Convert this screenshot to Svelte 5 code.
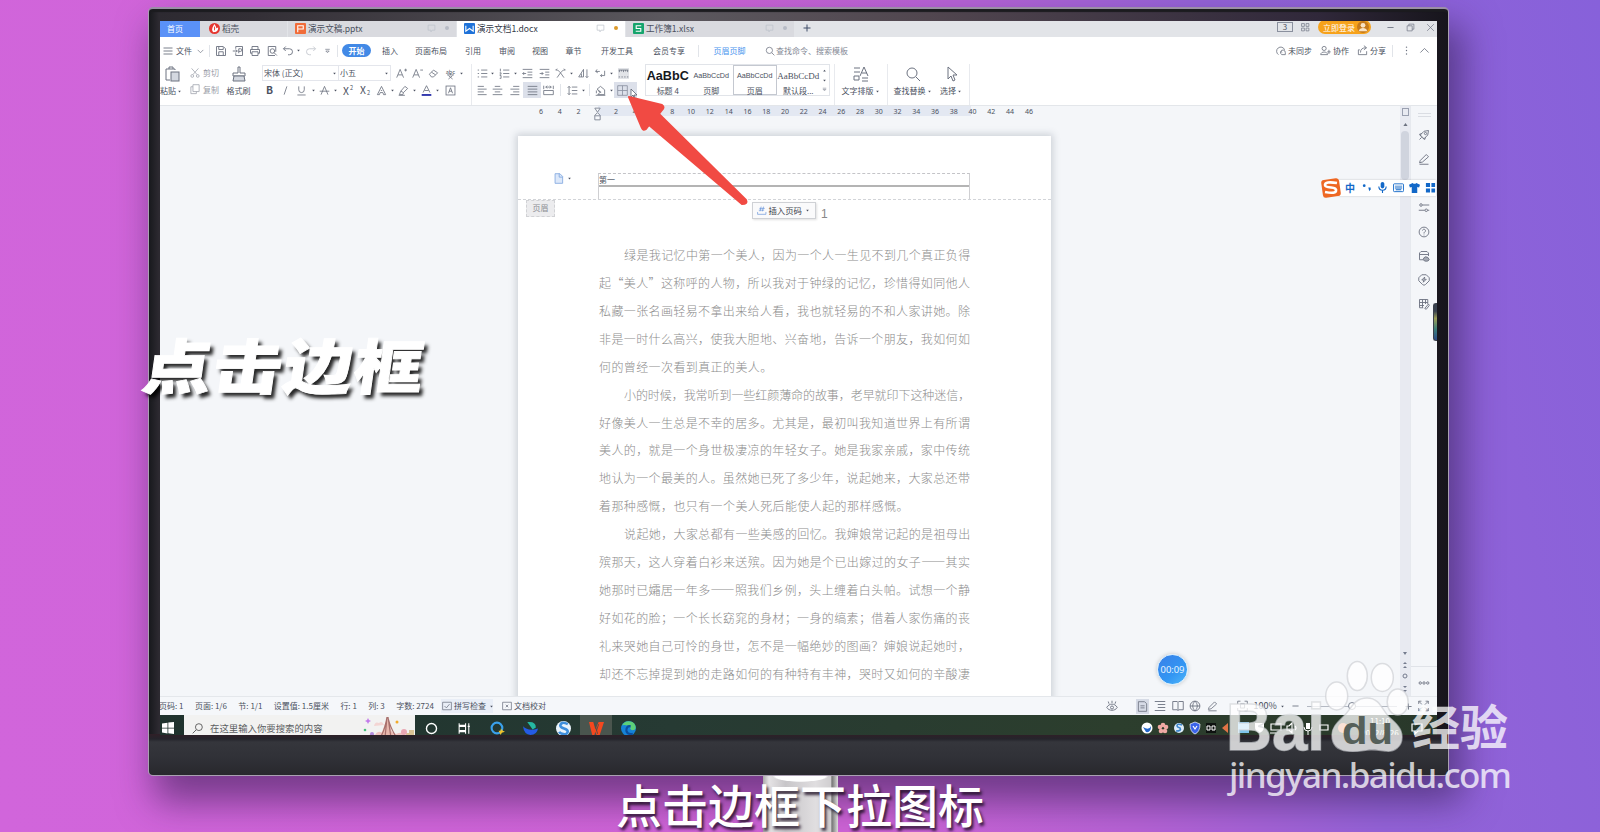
<script lang="ts">
	type Tool = [name: string, width: number, active?: boolean];

	// 16x16 line icons
	const icons: Record<string, string> = {
		menu: '<path d="M2 4h12M2 8h12M2 12h12"/>',
		down: '<path d="M3 6l5 5 5-5"/>',
		up: '<path d="M2 11l6-6 6 6"/>',
		caret: '<path class="fill" d="M5 6h6l-3 4z"/>',
		save: '<path d="M2 2h9l3 3v9H2zM5 2v4h6V3M5 14V9h6v5"/>',
		pdf: '<path d="M5 2h9v12H5v-3M5 5V2M1 8h6M5 6l2 2-2 2M9 11V5h2.500a1.500 1.500 0 0 1 0 3.500H9"/>',
		print: '<path d="M4 6V2h8v4M4 11H2V6h12v5h-2M4 9h8v5H4z"/>',
		preview: '<path d="M12 14H3V2h10v7"/><circle cx="8.500" cy="8" r="3"/><path d="M10.500 10l4 4"/>',
		undo: '<path d="M5 2L2 5l3 3M2 5h8a4 4 0 0 1 0 8H8"/>',
		redo: '<path d="M11 2l3 3-3 3M14 5H6a4 4 0 0 0 0 8h2"/>',
		more: '<path d="M4 5h8M5 8l3 3 3-3z"/>',
		search: '<circle cx="7" cy="7" r="5"/><path d="M11 11l4 4"/>',
		paste: '<path d="M11 4V3H2v11h4M5 3V1h4v2"/><rect x="7" y="6" width="8" height="9" fill="#d4d8e0"/>',
		cut: '<path d="M3 2l8 9M13 2L5 11"/><circle cx="4" cy="13" r="2"/><circle cx="12" cy="13" r="2"/>',
		copy: '<path d="M5 1h9v10H5zM5 4H2v10h8v-3"/>',
		brush: '<path d="M7 1h2v6h5v3H2V7h5z"/><path d="M3 10h10l1 5H2z" fill="#d4d8e0"/>',
		bold: '<text x="3" y="13.500" font-size="15" font-weight="700">B</text>',
		italic: '<path d="M10 2L6 14"/>',
		under: '<path d="M4 2v5a4 4 0 0 0 8 0V2M2 14.500h12"/>',
		strike: '<path d="M3 14L8 2l5 12M1 9h14"/>',
		sup: '<text x="0" y="14" font-size="15">X</text><text x="10" y="7" font-size="8">2</text>',
		sub: '<text x="0" y="13" font-size="15">X</text><text x="10" y="15" font-size="8">2</text>',
		outline: '<path d="M2 14L8 2l6 12h-3l-1-3H6l-1 3zM7 8h2"/>',
		marker: '<path d="M4 9l6-7 4 3-6 6zM4 9l-2 5h5l1-3M1 15h9" />',
		color: '<path d="M3 11L8 1l5 10M5 8h6"/><path d="M1 14.500h14" stroke="#232aa8" stroke-width="2.600"/>',
		boxa: '<rect x="1.500" y="1.500" width="13" height="13"/><path d="M5 12l3-8 3 8M6 9h4"/>',
		bigger: '<path d="M1 14L6 2l5 12M3 10h6M12 3h4M14 1v4"/>',
		smaller: '<path d="M1 14L6 2l5 12M3 10h6M12 3h4"/>',
		eraser: '<path d="M2 9l6-6 6 4-6 6H5zM5 6l6 4"/>',
		pinyin: '<text x="1" y="8" font-size="8">abc</text><path d="M3 10h10M8 8v2M5 11l6 5M11 11l-6 5"/>',
		bullets: '<path d="M6 3h9M6 8h9M6 13h9M1 3h2M1 8h2M1 13h2"/>',
		numbers: '<path d="M6 3h9M6 8h9M6 13h9M2 1v4M1 7h2v2H1M1 11h2v4H1"/>',
		outdent: '<path d="M1 2h14M8 6h7M8 10h7M1 14h14M6 8H1M3 6L1 8l2 2"/>',
		indent: '<path d="M1 2h14M9 6h6M9 10h6M1 14h14M1 8h5M4 6l2 2-2 2"/>',
		width: '<path d="M3 14l5-7 5 7M1 3h3M12 3h3M4 3l4 4 4-4M1 3l2-2M15 3l-2-2"/>',
		sort: '<path d="M1 13L8 2v11zM5 8v5M13 2v12M11 12l2 2 2-2"/>',
		wrap: '<path d="M3 2L1 5l3 2M1 5h6M14 4v7H8M10 9l-2 2 2 2"/>',
		tabs: '<path d="M1 3h14M2 3v3M5 3v2M8 3v3M11 3v2M14 3v3M1 13h2M5 13h2M9 13h2M13 13h2"/>',
		left: '<path d="M1 2h9M1 6h13M1 10h9M1 14h13"/>',
		center: '<path d="M4 2h8M1 6h14M4 10h8M1 14h14"/>',
		right: '<path d="M6 2h9M2 6h13M6 10h9M2 14h13"/>',
		justify: '<path d="M1 2h14M1 6h14M1 10h14M1 14h14"/>',
		spread: '<path d="M1 1v5M15 1v5M4 3h8M1 8h14v6H1zM6 1L4 3l2 2M10 1l2 2-2 2"/>',
		spacing: '<path d="M7 3h8M7 8h8M7 13h8M3 2v12M1 4l2-2 2 2M1 12l2 2 2-2"/>',
		shade: '<path d="M3 6l5-4 6 5v7H4l4-4zM1 15h14M4 8l5 3M2 8v4"/>',
		border: '<path d="M1 1h14v14H1zM8 1v14M1 8h14" stroke="#8b91a0"/>',
		typeset: '<path d="M1 2h6M1 6h6M1 10h5v4H1zM9 12h6M9 15h6M7 10l4-9 4 9M9 7h5"/>',
		pointer: '<path d="M4 1v12l3-3 2 5 2-1-2-5h4z"/>',
		sync: '<path d="M5 14a6 6 0 1 1 9-7M10 14a3.500 3.500 0 1 1 5-3v3h-5M9 9l1 2"/>',
		people: '<circle cx="6" cy="5" r="3"/><path d="M1 14c0-5 10-5 10 0zM13 7v6M10.500 10h5"/>',
		share: '<path d="M4 7H2v7h12V9M5 11c0-5 3-7 8-7M10 1l4 3-4 3"/>',
		dots: '<path d="M8 3v.1M8 8v.1M8 13v.1" stroke-width="2" stroke-linecap="round"/>',
		hdots: '<circle cx="3" cy="8" r="1.600"/><circle cx="8" cy="8" r="1.600"/><circle cx="13" cy="8" r="1.600"/>',
		rocket: '<path d="M3 8l5-5 6-1-1 6-5 5zM5 6L2 7l2 3M10 11l-1 3-3-2M2 14l3-3"/><circle cx="10" cy="6" r="1.500"/>',
		pen: '<path d="M3 10l8-8 3 3-8 7-4 1zM2 15h12"/>',
		sliders: '<circle cx="4" cy="4" r="1.700"/><path d="M6 4h9M1 11h8M13 11h2"/><circle cx="11" cy="11" r="1.700"/>',
		help: '<circle cx="8" cy="8" r="6.500"/><path d="M6 6a2 2 0 1 1 3 2l-1 1v1M8 11.500v1"/>',
		cloud: '<path d="M2 13V4l2-2h8l2 2v4M2 6h12M2 13h5"/><path d="M7 13q0-3 3-4 4 0 5 4-1 2-4 2-3 0-4-2z" fill="#a5aab4"/>',
		diamond: '<path d="M5 1h6l4 4v4l-5 5-2 1-2-1-5-5V5zM5 8l4-4-1 3h3l-4 4 1-3z"/>',
		grid: '<path d="M2 2h11v6M2 2v11h5M2 6h11M2 10h6M6 2v11M10 2v6M9 14l5-6 1 2-4 5z"/>',
		eye: '<path d="M1 10c3-6 11-6 14 0-3 5-11 5-14 0zM8 4V1M4 5L3 2M12 5l1-3"/><circle cx="8" cy="10" r="2"/>',
		page: '<path d="M2 1h9l3 3v11H2zM5 7h6M5 10h6"/>',
		outlineview: '<path d="M1 2h14M5 6h10M5 10h10M1 14h14"/>',
		book: '<path d="M1 2h6l1 1 1-1h6v11H9l-1 1-1-1H1zM8 3v11"/>',
		globe: '<circle cx="8" cy="8" r="6.500"/><path d="M1.500 8h13M8 1.500c-4 4-4 9 0 13M8 1.500c4 4 4 9 0 13"/>',
		fit: '<path d="M1 5V1h4M11 1h4v4M15 11v4h-4M5 15H1v-4M5 5h6v6H5z"/>',
		expand: '<path d="M1 5V1h4M11 1h4v4M15 11v4h-4M5 15H1v-4M1 1l5 5M15 1l-5 5M1 15l5-5M15 15l-5-5"/>',
		check: '<path d="M1 2h14v12H1zM4 8l3 3 5-6"/>',
		proof: '<path d="M1 2h14v12H1zM6 6l4 4M10 6l-4 4"/>',
		minus: '<path d="M1 8h14" stroke-width="2"/>',
		plus: '<path d="M8 1v14M1 8h14" stroke-width="2"/>',
		close: '<path d="M2 2l12 12M14 2L2 14"/>',
		restore: '<path d="M2 5h9v9H2zM5 5V2h9v9h-3"/>',
		apps: '<path d="M1 1h5v5H1zM9 1h5v5H9zM1 9h5v5H1zM9 9h5v5H9z"/>',
		bubble: '<path d="M2 2h12v9H9l-2 3v-3H2z"/>',
		file: '<path d="M3 1h7l4 4v10H3z" fill="#dce8fa"/><path d="M9 1v5h5"/>'
	};

	const quick = ['save', 'pdf', 'print', 'preview', 'undo', 'caret', 'redo', 'more'];
	const menus = ['开始', '插入', '页面布局', '引用', '审阅', '视图', '章节', '开发工具', '会员专享'];

	const fontTop: Tool[] = [['bigger', 15], ['smaller', 16.5], ['eraser', 16.5], ['pinyin', 16], ['caret', 6]];
	const fontBottom: Tool[] = [
		['bold', 15], ['italic', 17], ['under', 15], ['caret', 8], ['strike', 15], ['caret', 7], ['sup', 18], ['sub', 16],
		['outline', 16], ['caret', 6], ['marker', 16], ['caret', 7], ['color', 17], ['caret', 5], ['boxa', 20]
	];
	const paraTop: Tool[] = [
		['bullets', 14], ['caret', 7], ['numbers', 16], ['caret', 7], ['outdent', 17], ['indent', 16], ['width', 16],
		['caret', 7], ['sort', 17], ['wrap', 16], ['caret', 6], ['tabs', 18]
	];
	const paraBottom: Tool[] = [
		['left', 14], ['center', 17], ['right', 17], ['justify', 18, true], ['spread', 15], ['sep', 8], ['spacing', 16],
		['caret', 6], ['sep', 6], ['shade', 16], ['caret', 6], ['border', 23, true]
	];

	const styles = [
		{ sample: 'AaBbC', name: '标题 4', kind: 'heading' },
		{ sample: 'AaBbCcDd', name: '页脚', kind: 'small' },
		{ sample: 'AaBbCcDd', name: '页眉', kind: 'small chosen' },
		{ sample: 'AaBbCcDd', name: '默认段...', kind: 'serif' }
	];

	const ruler = ['6', '4', '2', '', ...Array.from({ length: 23 }, (_, i) => String(i * 2 + 2))];

	const lines = [
		{ text: '绿是我记忆中第一个美人，因为一个人一生见不到几个真正负得', kind: 'first' },
		{ text: '起“美人”这称呼的人物，所以我对于钟绿的记忆，珍惜得如同他人', kind: '' },
		{ text: '私藏一张名画轻易不拿出来给人看，我也就轻易的不和人家讲她。除', kind: '' },
		{ text: '非是一时什么高兴，使我大胆地、兴奋地，告诉一个朋友，我如何如', kind: '' },
		{ text: '何的曾经一次看到真正的美人。', kind: 'last' },
		{ text: '小的时候，我常听到一些红颜薄命的故事，老早就印下这种迷信，', kind: 'first' },
		{ text: '好像美人一生总是不幸的居多。尤其是，最初叫我知道世界上有所谓', kind: '' },
		{ text: '美人的，就是一个身世极凄凉的年轻女子。她是我家亲戚，家中传统', kind: '' },
		{ text: '地认为一个最美的人。虽然她已死了多少年，说起她来，大家总还带', kind: '' },
		{ text: '着那种感慨，也只有一个美人死后能使人起的那样感慨。', kind: 'last' },
		{ text: '说起她，大家总都有一些美感的回忆。我婶娘常记起的是祖母出', kind: 'first' },
		{ text: '殡那天，这人穿着白衫来送殡。因为她是个已出嫁过的女子——其实', kind: '' },
		{ text: '她那时已孀居一年多——照我们乡例，头上缠着白头帕。试想一个静', kind: '' },
		{ text: '好如花的脸；一个长长窈窕的身材；一身的缟素；借着人家伤痛的丧', kind: '' },
		{ text: '礼来哭她自己可怜的身世，怎不是一幅绝妙的图画？婶娘说起她时，', kind: '' },
		{ text: '却还不忘掉提到她的走路如何的有种特有丰神，哭时又如何的辛酸凄', kind: '' }
	];

	const side = ['rocket', 'pen', '', 'sliders', 'help', 'cloud', 'diamond', 'grid'];
	const counts = ['页码: 1', '页面: 1/6', '节: 1/1', '设置值: 1.5厘米', '行: 1', '列: 3', '字数: 2724'];
	const views = ['outlineview', 'book', 'globe', 'pen'];
</script>

{#snippet icon(name: string)}
	<svg class="icon {name}" viewBox="0 0 16 16">{@html icons[name]}</svg>
{/snippet}

{#snippet tools(list: Tool[])}
	<div class="tools">
		{#each list as [name, width, active]}
			<span class="tool" class:active style="width: {width}px">
				{#if name === 'sep'}<i class="sep"></i>{:else}{@render icon(name)}{/if}
			</span>
		{/each}
	</div>
{/snippet}

<main class="stage" lang="zh-CN">
	<div class="monitor">
		<div class="screen">
			<header class="tabs">
				<div class="home">首页</div>
				<div class="tab">
					<svg class="logo" viewBox="0 0 12 12"><circle cx="6" cy="6" r="6" fill="#e5362f" /><path d="M6 1l2 4-1 1 3-1c0 4-2 5-5 5C2 8 4 4 6 1z" fill="#fff" /><path d="M6 4v4" stroke="#e5362f" /></svg>
					<span>稻壳</span>
				</div>
				<div class="tab">
					<svg class="logo" viewBox="0 0 12 12"><rect width="12" height="12" rx="1" fill="#f16c39" /><path d="M3 10V3h6v3.500H3" fill="none" stroke="#fff" stroke-width="1.200" /></svg>
					<span>演示文稿.pptx</span>
					<div class="state">{@render icon('bubble')}<i></i></div>
				</div>
				<div class="tab current">
					<svg class="logo" viewBox="0 0 12 12"><rect width="12" height="12" rx="1" fill="#1e72d9" /><path d="M2 3v6l4-3 4 3V3" fill="none" stroke="#fff" stroke-width="1.200" /></svg>
					<span>演示文档1.docx</span>
					<div class="state">{@render icon('bubble')}<i></i></div>
				</div>
				<div class="tab">
					<svg class="logo" viewBox="0 0 12 12"><rect width="12" height="12" rx="1" fill="#16a56d" /><path d="M9 3H3.500v3h5v3H3" fill="none" stroke="#fff" stroke-width="1.200" /></svg>
					<span>工作簿1.xlsx</span>
					<div class="state">{@render icon('bubble')}<i></i></div>
				</div>
				<div class="add">{@render icon('plus')}</div>
				<div class="window">
					<span class="count">3</span>
					{@render icon('apps')}
					<div class="login">立即登录<svg viewBox="0 0 14 14"><circle cx="7" cy="7" r="7" fill="#c57a1c" /><circle cx="7" cy="5" r="2.800" fill="#f9e3c4" /><path d="M2 12c1-5 9-5 10 0" fill="#f9e3c4" /></svg></div>
					<i class="sep"></i>
					{@render icon('minus')}
					{@render icon('restore')}
					{@render icon('close')}
				</div>
			</header>

			<nav class="menubar">
				{@render icon('menu')}
				<span>文件</span>
				{@render icon('down')}
				<i class="sep"></i>
				{#each quick as name}{@render icon(name)}{/each}
				<i class="sep"></i>
				{#each menus as name, i}<span class:pill={i === 0}>{name}</span>{/each}
				<i class="sep"></i>
				<span class="context">页眉页脚</span>
				<div class="find">{@render icon('search')}查找命令、搜索模板</div>
				<div class="account">
					<span>{@render icon('sync')}未同步</span>
					<span>{@render icon('people')}协作</span>
					<span>{@render icon('share')}分享</span>
					<i class="sep"></i>
					{@render icon('dots')}
					{@render icon('up')}
				</div>
			</nav>

			<section class="ribbon">
				<div class="big clip">{@render icon('paste')}<span>粘贴{@render icon('caret')}</span></div>
				<div class="pair">
					<span>{@render icon('cut')}剪切</span>
					<span>{@render icon('copy')}复制</span>
				</div>
				<div class="big painter">{@render icon('brush')}<span>格式刷</span></div>
				<div class="group font">
					<div class="line">
						<div class="select family">宋体 (正文){@render icon('caret')}</div>
						<div class="select size">小五{@render icon('caret')}</div>
						{@render tools(fontTop)}
					</div>
					{@render tools(fontBottom)}
				</div>
				<div class="group para">
					{@render tools(paraTop)}
					{@render tools(paraBottom)}
				</div>
				<div class="gallery">
					{#each styles as style}
						<div class="style {style.kind}"><b>{style.sample}</b><span>{style.name}</span></div>
					{/each}
					<div class="spin">{@render icon('caret')}{@render icon('caret')}{@render icon('more')}</div>
				</div>
				<div class="big typeset-box">{@render icon('typeset')}<span>文字排版{@render icon('caret')}</span></div>
				<div class="big search-box">{@render icon('search')}<span>查找替换{@render icon('caret')}</span></div>
				<div class="big pick-box">{@render icon('pointer')}<span>选择{@render icon('caret')}</span></div>
			</section>

			<section class="workspace">
				<div class="canvas">
					<div class="ruler">
						{#each ruler as mark, i}
							<span>
								{#if i === 3}
									<svg class="hanging" viewBox="0 0 10 14"><path d="M2 .5h6L5 5zM2 13.500v-5l3-3 3 3v5zM2 9h6" /></svg>
								{:else}{mark}{/if}
							</span>
						{/each}
					</div>
					<article class="sheet">
						<div class="page-header">
							<div class="file-menu">{@render icon('file')}{@render icon('caret')}</div>
							<div class="header-frame"><p>第一</p></div>
						</div>
						<div class="header-edge">
							<span class="tag">页眉</span>
							<div class="page-number">
								<button class="insert">
									<svg viewBox="0 0 16 16"><path d="M7 1L5 9M11 1L9 9M4 4h9M3 7h9M1 10v4h14v-4" /></svg>插入页码{@render icon('caret')}
								</button>
								<span>1</span>
							</div>
						</div>
						<div class="text">
							{#each lines as line}<p class={line.kind}>{line.text}</p>{/each}
						</div>
					</article>
				</div>
				<div class="scroll">
					<div class="scroll-top"></div>
					<svg class="tip" viewBox="0 0 10 10"><path d="M2 7l3-4 3 4z" /></svg>
					<div class="thumb"></div>
					<svg class="ends" viewBox="0 0 10 48"><path d="M3 4h4L5 7zM3 16l2-2 2 2zM3 20l2-2 2 2zM3 38h4l-2 2zM3 42h4l-2 2z" /><circle cx="5" cy="28" r="2" /></svg>
				</div>
				<aside class="side">
					<div class="grip"></div>
					{#each side as name}<div class="side-item">{#if name}{@render icon(name)}{/if}</div>{/each}
					<div class="side-more">{@render icon('hdots')}</div>
				</aside>
			</section>

			<footer class="status">
				<div class="counts">
					{#each counts as item}<span>{item}</span>{/each}
				</div>
				<div class="spell">{@render icon('check')}拼写检查{@render icon('caret')}</div>
				<div class="proofing">{@render icon('proof')}文档校对</div>
				<div class="views">
					{@render icon('eye')}
					<span class="view-on">{@render icon('page')}</span>
					{#each views as name}{@render icon(name)}{/each}
				</div>
				<div class="zoom">
					{@render icon('fit')}
					<span>100%</span>
					{@render icon('caret')}
					{@render icon('minus')}
					<div class="track"><i></i></div>
					{@render icon('plus')}
					{@render icon('expand')}
				</div>
			</footer>

			<footer class="taskbar">
				<div class="start"><svg viewBox="0 0 12 12"><path d="M0 1.500l5.500-.8v5H0zM6.300.6L12 0v5.700H6.300zM0 6.400h5.500v5L0 10.600zM6.300 6.400H12V12l-5.700-.8z" fill="#fff" /></svg></div>
				<div class="task-search">
					<svg class="glass" viewBox="0 0 16 16"><circle cx="10" cy="6" r="5" /><path d="M6 10l-5 5" /></svg>
					<span>在这里输入你要搜索的内容</span>
					<svg class="art" viewBox="0 0 52 22">
						<path d="M4 22q3-6 8-3 3-6 9-1 6-5 12 0 8-4 10 4z" fill="#eec3bf" />
						<path d="M17 22L24 2l7 20z" fill="#e8b7ad" />
						<path d="M17 22q5-8 7-21M22 22l2-21M28 22L25 1M34 22q-6-8-9-20" stroke="#a76f6c" stroke-width="1.200" fill="none" />
						<path d="M11 10q1-5 5-3 3-3 5 2z" fill="#f3d5d3" />
						<path d="M5 2l1 2 2 1-2 1-1 2-1-2-2-1 2-1z" fill="#c27bea" />
						<path d="M43 22v-5h3v-3h5v8z" fill="#d9c395" />
						<circle cx="34" cy="6" r="1.500" fill="#f3ab2b" /><circle cx="2" cy="14" r="1.300" fill="#46c07a" />
						<circle cx="41" cy="16" r="3" fill="#e9a7b3" /><circle cx="9" cy="18" r="2" fill="#b28add" />
					</svg>
				</div>
				<div class="apps">
					<span><svg viewBox="0 0 14 14"><circle cx="7" cy="7" r="4.700" fill="none" stroke="#fff" stroke-width="1.300" /></svg></span>
					<span><svg viewBox="0 0 14 14"><path d="M2 2v2h6V2M2 12v-2h6v2M2 5h6v4H2zM11 2v10M10 5h2" fill="none" stroke="#fff" /></svg></span>
					<span><svg viewBox="0 0 14 14"><circle cx="6.500" cy="6.500" r="5" fill="none" stroke="#3aa0ea" stroke-width="2" /><path d="M8 9h2V7l2 2 2 1-3 1-1 2z" fill="#f0c52c" /></svg></span>
					<span><svg viewBox="0 0 14 14"><path d="M4 1q8-1 8 5L9 8z" fill="#25b8a2" /><path d="M0 5q5 5 14 2-1 6-7 6-6 0-7-8z" fill="#245be5" /></svg></span>
					<span><svg viewBox="0 0 14 14"><circle cx="7" cy="7" r="7" fill="#e9f3fb" /><path d="M11 3Q5 0 4 4c0 4 7 2 7 6-1 4-7 2-8 0" fill="none" stroke="#3f8fdc" stroke-width="2.400" /></svg></span>
					<span class="running"><svg viewBox="0 0 14 14"><path d="M0 1h4l2 7 3-7h5L10 13H7l-1-3-1 3H3z" fill="#f4481f" /><path d="M5 1l3 11M9 3l-2 6" stroke="#4a4f48" stroke-width=".8" /></svg></span>
					<span><svg viewBox="0 0 14 14"><circle cx="7" cy="7" r="7" fill="#1683d8" /><path d="M1 4Q4-1 9 .500c5 1 6 7 3 8-3 .500-4-1-3-3Q5 3 1 4z" fill="#5cd078" /><path d="M9 5Q5 4 5 9q1 4 6 3" fill="none" stroke="#0b4f9e" stroke-width="2" /></svg></span>
				</div>
				<svg class="tray" viewBox="0 0 300 26">
					<circle cx="7" cy="13" r="5.500" fill="#fff" /><path d="M3 12q6 4 8-1 0 7-5 6z" fill="#2265c8" />
					<g fill="#f0a9a4"><circle cx="20" cy="12" r="2.300" /><circle cx="23" cy="10" r="2.300" /><circle cx="26" cy="12" r="2.300" /><circle cx="21" cy="16" r="2.300" /><circle cx="25" cy="16" r="2.300" /></g>
					<circle cx="39" cy="13" r="5" fill="#dcecf8" /><path d="M42 10q-5-2-5 1 0 1 3 2 2 3-4 3" fill="none" stroke="#3b84c8" stroke-width="1.600" />
					<path d="M50 9l5-2 5 2q0 8-5 10-5-2-5-10z" fill="#3b63e8" stroke="#fff" stroke-width=".7" /><path d="M53 11l2 3 2-3" fill="none" stroke="#fff" stroke-width="1.200" />
					<rect x="66" y="8" width="10" height="10" fill="#0e1210" /><path d="M67 11h3v4h-3zM72 11h3v4h-3z" fill="none" stroke="#fff" />
					<path d="M82 13l6-5v10z" fill="#e07446" />
					<rect x="98" y="7" width="11" height="11" fill="#7fc4ec" />
					<path d="M115 8h9v5q-1 4-5 5-4-2-4-6z" fill="#fff" />
					<g fill="none" stroke="#fff" stroke-width="1.200"><path d="M131 9h10v6h-10zM130 18h6M147 11h2l3-3v10l-3-3h-2zM155 11q2 2 0 4M180 10h8v5h-8zM272 9h10v7h-4l-3 3v-3h-3z" /></g>
					<path d="M166 8h4v6h-4z" fill="#fff" /><path d="M164 12q0 4 4 4t4-4M168 16v4" fill="none" stroke="#fff" />
					<circle cx="203" cy="13" r="5" fill="#e88355" />
					<text x="240" y="9" text-anchor="middle" font-size="8" fill="#fff">11:10</text>
					<text x="240" y="21" text-anchor="middle" font-size="8" fill="#fff">2022/8/26</text>
				</svg>
			</footer>
		</div>
	</div>

	<div class="edge-widget"></div>
	<div class="recorder">00:09</div>

	<div class="ime">
		<svg class="ime-logo" viewBox="0 0 22 22"><rect x="2" y="2" width="18" height="18" rx="3" fill="#ee6723" transform="rotate(-8 11 11)" /><path d="M17 6Q5 4 5 8q0 2 6 2.500 6 .500 5 3.500-1 3-11 1" fill="none" stroke="#fff" stroke-width="2.600" /></svg>
		<div class="ime-keys">
			<b>中</b>
			<svg viewBox="0 0 12 12"><circle cx="3.500" cy="4" r="1.500" /><path d="M8 6h2.500v2L9 10z" /></svg>
			<svg viewBox="0 0 12 12"><rect x="4" y="0" width="4" height="7" rx="2" /><path d="M2 5q0 4 4 4t4-4M6 9v3" fill="none" stroke="#1268c8" stroke-width="1.200" /></svg>
			<svg viewBox="0 0 12 12"><rect x=".5" y="2" width="11" height="8.500" rx="1" fill="none" stroke="#1268c8" /><path d="M2 4h8v1H2zM2 6h8v1H2zM3 8h6v1H3z" /></svg>
			<svg viewBox="0 0 12 12"><path d="M4 1q2 2 4 0l4 2-1 3-2-.500V12H3V5.500L1 6 0 3z" /></svg>
			<svg viewBox="0 0 12 12"><path d="M1 1h4.500v4.500H1zM7 1h4v4.500H7zM1 7h4.500v4.500H1zM7 7h4v4.500H7z" /></svg>
		</div>
	</div>

	<svg class="cursor" viewBox="0 0 8 10"><path d="M1 0v8l2-2 1 3 1-.5L4 6h3z" /></svg>
	<svg class="arrow" viewBox="0 0 125 112">
		<path d="M5 2L38 10q3 2 0 5l-3 4 87 86q2 4-4 4L25 30l-3 4q-3 2-4-1z" />
	</svg>

	<div class="stand"></div>
	<h1 class="callout">点击边框</h1>
	<p class="caption">点击边框下拉图标</p>

	<svg class="watermark" viewBox="0 0 300 145">
		<g class="mark">
			<ellipse cx="116.700" cy="36" rx="11" ry="14" />
			<ellipse cx="137.300" cy="16" rx="10" ry="14.500" />
			<ellipse cx="162.300" cy="17.500" rx="11" ry="14" />
			<ellipse cx="177.700" cy="42" rx="10.500" ry="13" />
			<path d="M147 38c13 0 15 12 22 19 8 7 13 12 13 20 0 10-8 15-16 14-8-1-14-2-19-1-8 1-13 2-20 1-10-1-15-7-15-16 0-8 6-13 12-19 7-7 10-18 23-18z" />
		</g>
		<text class="brand" x="6" y="90" textLength="99" lengthAdjust="spacingAndGlyphs">Bai</text>
		<text class="du" x="122" y="84" textLength="51" lengthAdjust="spacingAndGlyphs">du</text>
		<text class="cn" x="192" y="85" textLength="96">经验</text>
		<text class="url" x="9" y="128" textLength="283">jingyan.baidu.com</text>
	</svg>
</main>

<style>
	:global(body) {
		margin: 0;
		overflow: hidden;
	}

	.stage {
		position: relative;
		box-sizing: border-box;
		width: 1600px;
		height: 832px;
		padding: 7px 0 0 148px;
		overflow: hidden;
		background: linear-gradient(78deg, #d165db 0%, #cf64d7 48%, #b763d6 64%, #9463d8 78%, #8761da 100%);
		color: #4b5160;
		font: 8px/1.2 'Noto Sans CJK SC', sans-serif;
		white-space: nowrap;
	}

	.monitor {
		box-sizing: border-box;
		width: 1301px;
		height: 769px;
		padding: 12px 11px 0;
		border: 1px solid #aaa0b2;
		border-top: 2px solid #9b8fa6;
		border-radius: 5px;
		background:
			linear-gradient(#301f27, #24242b 5px, #35363c 8px, #303137 24px, #28282d) 0 100% / 100% 41px no-repeat,
			linear-gradient(90deg, #18191d 0, #2d2a31 10px, #332f36 8%, #5b585e 40%, #51464f 60%, #30283a 90%, #17151c);
		box-shadow: inset 0 3px 1px #1b1b1f, 10px 22px 36px 4px rgba(45, 25, 75, 0.55);
	}

	.screen {
		display: flex;
		flex-direction: column;
		width: 1277px;
		height: 714px;
		overflow: hidden;
		background: #fff;
	}

	p,
	h1 {
		margin: 0;
	}

	.icon {
		flex: none;
		width: 12px;
		height: 12px;
		overflow: visible;
		fill: none;
		stroke: #6c7280;
		stroke-width: 1.2;
		justify-self: center;
	}

	.icon :global(.fill),
	.icon :global(text) {
		fill: #4b5160;
		stroke: none;
	}

	.icon.caret {
		width: 7px;
		height: 7px;
	}

	.sep {
		flex: none;
		width: 1px;
		height: 12px;
		background: #e1e4e9;
		justify-self: center;
	}

	.tabs {
		display: flex;
		flex: none;
		height: 16px;
		background: #e2e4e8;
		line-height: 15px;
	}

	.home {
		width: 40px;
		background: #5a91f7;
		color: #fff;
		text-align: center;
		padding-right: 10px;
		box-sizing: border-box;
	}

	.tab {
		display: flex;
		align-items: center;
		box-sizing: border-box;
		width: 169px;
		padding: 0 7px 2px 7px;
		gap: 2px;
		background: #d9dadf;
		border-right: 1px solid #e2e4e8;
		font-size: 8.6px;
	}

	.home + .tab {
		width: 88px;
		padding-left: 9px;
	}

	.tab.current {
		background: #fff;
		color: #343a48;
	}

	.logo {
		width: 11px;
		height: 11px;
	}

	.state {
		display: flex;
		align-items: center;
		gap: 9px;
		margin-left: auto;
	}

	.state .icon {
		width: 9px;
		height: 9px;
		stroke: #bbc0ca;
	}

	.state i {
		width: 4px;
		height: 4px;
		border-radius: 2px;
		background: #b7bbc6;
	}

	.current .state i {
		background: #dc9a2b;
	}

	.add {
		padding: 0 8px;
	}

	.add .icon {
		width: 8px;
		height: 8px;
		stroke: #3f4c68;
	}

	.window {
		display: flex;
		align-items: center;
		gap: 8px;
		margin: 0 2px 4px auto;
	}

	.window .icon {
		width: 9px;
		height: 9px;
	}

	.window .minus {
		width: 7px;
		margin: 0 4px 0 1px;
		stroke-width: 1.2;
	}

	.window .restore {
		margin-right: 3px;
	}

	.window .sep {
		margin-left: -4px;
	}

	.count {
		width: 14px;
		height: 8px;
		border: 1px solid #8a909e;
		line-height: 8px;
		text-align: center;
	}

	.login {
		display: flex;
		align-items: center;
		justify-content: space-between;
		width: 53px;
		height: 14px;
		padding: 0 2px 0 5px;
		margin-right: 3px;
		box-sizing: border-box;
		border-radius: 7px;
		background: #f6a21b;
		color: #fff;
	}

	.login svg {
		width: 12px;
	}

	.window .login + .sep {
		margin-left: -7px;
		margin-right: 2px;
	}

	.menubar {
		display: grid;
		flex: none;
		grid-template-columns: 15px 18px 14px 5px 17.5px 17px 17px 17px 14.5px 7px 18px 14px 6px 33px 34px 48px 36px 32px 34px 33px 54px 50px 8px 55px auto 1fr;
		align-items: center;
		height: 26px;
		padding-top: 1px;
		box-sizing: border-box;
		text-align: center;
	}

	.menubar > .down,
	.menubar .up {
		width: 9px;
	}

	.menubar > .redo {
		stroke: #c5c8cf;
	}

	.menubar > .more {
		width: 9px;
	}

	.pill {
		width: 29px;
		justify-self: center;
		border-radius: 7px;
		background: #4289e6;
		color: #fff;
		line-height: 13px;
		font-weight: 700;
	}

	.context {
		color: #4a94ee;
	}

	.find {
		display: flex;
		align-items: center;
		gap: 1px;
		padding-left: 8px;
		color: #848995;
	}

	.find .icon {
		width: 10px;
	}

	.account {
		display: flex;
		align-items: center;
		justify-content: flex-end;
		gap: 8px;
		padding-right: 7px;
	}

	.account span {
		display: flex;
		align-items: center;
		gap: 2px;
	}

	.account .icon {
		width: 11px;
		height: 11px;
	}

	.account .sep {
		margin-left: -2px;
	}

	.account .dots {
		margin-right: -1px;
	}

	.ribbon {
		display: flex;
		flex: none;
		box-sizing: border-box;
		height: 43px;
		border-bottom: 1px solid #e3e6ea;
		padding-top: 1px;
	}

	.big {
		display: flex;
		flex-direction: column;
		align-items: center;
		gap: 4px;
		padding-top: 2px;
	}

	.big > .icon {
		width: 16px;
		height: 16px;
		stroke-width: 1;
	}

	.big > span {
		display: flex;
		align-items: center;
		height: 10px;
	}

	.clip {
		width: 23px;
		margin-right: 2px;
	}

	.pair {
		display: flex;
		flex-direction: column;
		width: 39px;
		padding: 3px 0 0 4px;
		box-sizing: border-box;
		gap: 6px;
		color: #999da7;
	}

	.pair span {
		display: flex;
		align-items: center;
		gap: 2px;
	}

	.pair .icon {
		stroke: #a4a8b1;
		height: 11px;
	}

	.painter {
		width: 29px;
	}

	.group {
		display: flex;
		flex-direction: column;
		box-sizing: border-box;
	}

	.font {
		width: 219px;
		padding: 1px 0 0 9px;
		border-right: 1px solid #e8eaee;
	}

	.line {
		display: flex;
		height: 16px;
	}

	.select {
		display: flex;
		align-items: center;
		justify-content: space-between;
		box-sizing: border-box;
		height: 16px;
		padding-left: 1px;
		border: 1px solid #e4e6ec;
	}

	.family {
		width: 77px;
	}

	.size {
		width: 52px;
		margin-right: 3px;
		border-left: 0;
	}

	.tools {
		display: flex;
		height: 18px;
	}

	.line .tools {
		height: 16px;
	}

	.tool {
		display: flex;
		align-items: center;
		justify-content: center;
		flex: none;
		height: 16px;
	}

	.font > .tools,
	.para > .tools + .tools {
		padding-top: 1px;
	}

	.tool .icon {
		width: 11px;
		height: 11px;
	}

	.tool .icon.caret {
		width: 7px;
		height: 7px;
	}

	.tool.active {
		background: #dce0ea;
	}

	.tool .border {
		margin-right: 6px;
	}

	.para {
		width: 166px;
		padding: 1px 0 0 3px;
	}

	.para > .tools:first-child {
		height: 16px;
	}

	.gallery {
		display: flex;
		width: 185px;
		height: 32px;
		margin: 0 4px 0 7px;
		box-sizing: border-box;
		border: 1px solid #e1e4e9;
	}

	.style {
		display: flex;
		flex-direction: column;
		align-items: center;
		box-sizing: border-box;
		width: 43.5px;
		border: 1px solid transparent;
	}

	.style b {
		height: 20px;
		font: 7.2px/20px 'Liberation Sans', sans-serif;
	}

	.style.heading b {
		color: #15181d;
		font-size: 12.6px;
		font-weight: 700;
	}

	.style.serif b {
		font: 9px/20px 'Liberation Serif', serif;
	}

	.style.chosen {
		border-color: #c4c8d0;
	}

	.spin {
		display: flex;
		flex: 1;
		flex-direction: column;
		align-items: center;
		justify-content: space-between;
		padding: 2px 0;
	}

	.spin .caret:first-child {
		transform: scaleY(-1);
	}

	.spin .more {
		width: 7px;
		height: 7px;
	}

	.typeset-box {
		width: 52px;
		border-left: 1px solid #e8eaee;
		border-right: 1px solid #e8eaee;
	}

	.search-box {
		width: 50px;
	}

	.pick-box {
		width: 27px;
		padding-right: 4px;
		border-right: 1px solid #e8eaee;
	}

	.workspace {
		display: flex;
		flex: 1;
		min-height: 0;
		background: #f4f6f9;
	}

	.canvas {
		flex: 1;
		overflow: hidden;
	}

	.ruler {
		display: flex;
		height: 10px;
		padding-left: 371.6px;
		background: linear-gradient(#e3e8f2, #e3e8f2) 438px 0 / 373px 100% no-repeat;
		font: 7px/11px 'Noto Sans', sans-serif;
		text-align: center;
	}

	.ruler span {
		width: 18.78px;
	}

	.hanging {
		width: 9px;
		height: 14px;
		margin-top: 1px;
		fill: #f7f9fc;
		stroke: #7d8392;
	}

	.sheet {
		box-sizing: border-box;
		width: 533px;
		height: 600px;
		margin: 20px 0 0 358px;
		background: #fff;
		box-shadow: 0 0 7px 2px rgba(70, 80, 100, 0.22);
	}

	.page-header {
		display: flex;
		align-items: flex-end;
		height: 64px;
		box-sizing: border-box;
		padding-left: 35px;
		border-bottom: 1px dashed #d2d4d8;
	}

	.file-menu {
		display: flex;
		align-items: center;
		width: 45px;
		height: 10px;
		gap: 2px;
		margin-bottom: 16px;
	}

	.file-menu .file {
		height: 11px;
		width: 11px;
		stroke: #7fa6de;
	}

	.header-frame {
		box-sizing: border-box;
		width: 372px;
		height: 26px;
		border: 1px solid #cfcfd2;
		border-top: 1px dashed #c4c4c8;
		border-bottom: 0;
	}

	.header-frame p {
		height: 11px;
		border-bottom: 2px solid #b4b4b4;
		line-height: 11px;
	}

	.header-edge {
		display: flex;
		height: 43px;
	}

	.tag {
		box-sizing: border-box;
		width: 29px;
		height: 17px;
		margin-left: 8px;
		border: 1px dashed #d1d2d5;
		background: #ececee;
		color: #8b8d92;
		line-height: 14px;
		text-align: center;
	}

	.page-number {
		display: flex;
		gap: 5px;
		margin: 2px 0 0 197px;
		font: 12px/24px 'Liberation Sans', sans-serif;
		color: #888;
	}

	.insert {
		display: flex;
		align-items: center;
		box-sizing: border-box;
		width: 64px;
		height: 17px;
		padding: 0 4px;
		gap: 2px;
		border: 1px solid #cfd1d5;
		background: #fafafb;
		box-shadow: 1px 1px 2px rgba(0, 0, 0, 0.12);
		color: #3e424c;
		font: 8.4px/1 'Noto Sans CJK SC', sans-serif;
	}

	.insert svg:first-child {
		width: 10px;
		fill: none;
		stroke: #5385d5;
	}

	.text {
		width: 371px;
		margin-left: 81px;
		color: #8c8c8c;
		font-size: 12px;
		font-weight: 300;
	}

	.text p {
		height: 27.93px;
		line-height: 24px;
		text-align: justify;
		text-align-last: justify;
	}

	.text .first {
		padding-left: 25px;
		letter-spacing: -0.15px;
	}

	.text .last {
		letter-spacing: 0.4px;
		text-align-last: left;
	}

	.scroll {
		display: flex;
		flex-direction: column;
		align-items: center;
		width: 10px;
		background: #e8eaf1;
	}

	.scroll-top {
		width: 5px;
		height: 6px;
		margin-top: 2px;
		border: 1px solid #9aa0b0;
	}

	.tip {
		width: 7px;
		margin: 5px 0 3px;
		fill: #6c7280;
	}

	.thumb {
		width: 8px;
		height: 49px;
		border-radius: 4px;
		background: #d0d4de;
	}

	.ends {
		width: 10px;
		height: 48px;
		margin-top: auto;
		fill: #747b8d;
	}

	.ends circle {
		fill: none;
		stroke: #747b8d;
	}

	.side {
		display: flex;
		flex-direction: column;
		width: 26px;
		border-left: 1px solid #e6e9ee;
	}

	.grip {
		width: 13px;
		height: 2px;
		margin: 7px auto 6px;
		border: solid #dadde3;
		border-width: 1px 0;
	}

	.side-item {
		display: flex;
		align-items: center;
		justify-content: center;
		height: 24.2px;
	}

	.side-more {
		margin-top: auto;
		height: 20px;
		padding-top: 9px;
		border-top: 1px solid #e0e3e8;
		text-align: center;
	}

	.side .hdots {
		height: 14px;
	}

	.status {
		display: flex;
		flex: none;
		align-items: center;
		box-sizing: border-box;
		height: 19px;
		border-top: 1px solid #e4e7eb;
		background: #f5f7fa;
	}

	.counts {
		display: flex;
		justify-content: space-between;
		width: 275px;
		margin-left: -1px;
	}

	.spell,
	.proofing {
		display: flex;
		align-items: center;
		gap: 2px;
	}

	.spell {
		width: 51px;
		height: 14px;
		margin: 0 9px 0 7px;
		padding-left: 1px;
		background: #e9eef7;
	}

	.spell .check,
	.proofing .proof {
		width: 10px;
	}

	.views {
		display: flex;
		align-items: center;
		gap: 5.5px;
		margin-left: 560px;
	}

	.view-on {
		display: flex;
		justify-content: center;
		width: 13px;
		height: 15px;
		align-items: center;
		margin-left: 12px;
		background: #d6dbe6;
	}

	.view-on .icon {
		width: 11px;
		height: 11px;
	}

	.views .pen,
	.zoom .icon {
		width: 11px;
	}

	.zoom {
		display: flex;
		align-items: center;
		margin-left: 19px;
		gap: 6px;
	}

	.zoom .caret,
	.zoom .minus,
	.zoom .plus {
		width: 7px;
	}

	.zoom .plus {
		height: 7px;
	}

	.zoom span {
		font-size: 9px;
		margin-right: -4px;
	}

	.track {
		display: flex;
		align-items: center;
		justify-content: center;
		width: 90px;
		height: 1px;
		margin: 0 2px;
		background: #b4b9c3;
	}

	.track i {
		width: 6px;
		height: 6px;
		border: 1px solid #7e8593;
		border-radius: 50%;
		background: #fff;
	}

	.taskbar {
		display: flex;
		flex: none;
		height: 20px;
		overflow: hidden;
		background: linear-gradient(90deg, #1f322d, #263a33 40%, #2c3e2d 75%, #29382a);
	}

	.start {
		width: 24px;
		padding: 7px 0 0 2px;
		box-sizing: border-box;
	}

	.start svg {
		width: 12px;
	}

	.task-search {
		display: flex;
		align-items: center;
		box-sizing: border-box;
		width: 231px;
		height: 27px;
		padding-left: 8px;
		background: #f2f2f1;
		color: #5c5e62;
		font-size: 9.4px;
	}

	.glass {
		width: 11px;
		margin-right: 7px;
		fill: none;
		stroke: #555;
		stroke-width: 1.3;
	}

	.art {
		width: 52px;
		margin: 0 0 4px auto;
	}

	.apps {
		display: flex;
		height: 26px;
	}

	.apps span {
		display: flex;
		align-items: center;
		justify-content: center;
		width: 33px;
	}

	.apps svg {
		width: 15px;
	}

	.apps .running {
		width: 32px;
		background: #4a554e;
	}

	.tray {
		width: 300px;
		height: 26px;
		margin: 0 -3px 0 auto;
	}

	.edge-widget {
		position: absolute;
		left: 1433px;
		top: 303px;
		width: 4px;
		height: 38px;
		border: 1px solid #3b404c;
		border-right: 0;
		border-radius: 3px 0 0 3px;
		box-sizing: border-box;
		background: linear-gradient(#39414f 20%, #9b9d57 40%, #3b7e79 70%, #2b4a8a);
	}

	.recorder {
		position: absolute;
		left: 1157px;
		top: 654px;
		width: 29px;
		height: 29px;
		border: 1px solid #d4ecfc;
		border-radius: 50%;
		background: linear-gradient(140deg, #3a7fe8, #3296f3 60%, #51b7fa);
		box-shadow: 0 0 4px rgba(0, 0, 0, 0.2);
		color: #e7f4ff;
		font: 9.4px/29px 'Noto Sans', sans-serif;
		text-align: center;
	}

	.ime {
		position: absolute;
		left: 1320px;
		top: 176px;
		display: flex;
		align-items: center;
		width: 117px;
		height: 23px;
	}

	.ime-logo {
		position: relative;
		flex: none;
		width: 22px;
	}

	.ime-keys {
		display: flex;
		align-items: center;
		height: 16px;
		gap: 5px;
		margin-left: -4px;
		padding-left: 7px;
		overflow: hidden;
		background: #fff;
		box-shadow: 0 0 2px rgba(0, 0, 0, 0.2);
		color: #1268c8;
	}

	.ime-keys b {
		width: 11px;
		font-size: 10px;
	}

	.ime-keys svg {
		flex: none;
		width: 11px;
		fill: #1268c8;
	}

	.cursor {
		position: absolute;
		left: 630px;
		top: 89px;
		width: 8px;
		height: 10px;
		fill: #fff;
		stroke: #59606f;
		stroke-width: 0.8;
	}

	.arrow {
		position: absolute;
		left: 624px;
		top: 95px;
		width: 125px;
		height: 112px;
		fill: #f14a43;
		stroke: #f14a43;
		stroke-width: 2;
		stroke-linejoin: round;
	}

	.stand {
		position: absolute;
		left: 763px;
		top: 776px;
		width: 75px;
		height: 56px;
		background:
			radial-gradient(ellipse at 50% 0, #fff 0 25px, transparent 28px) 0 0 / 100% 8px no-repeat,
			linear-gradient(90deg, #aaa, #e5e3e5 8%, #c8c6c9 30%, #e0dee0 70%, #d1cfd1 90%, #777 92%, #ddd);
	}

	.callout {
		position: absolute;
		left: 144px;
		top: 323px;
		color: #fff;
		font-size: 69px;
		font-weight: 900;
		letter-spacing: 1.4px;
		line-height: 80px;
		text-shadow: 4px 5px 4px rgba(0, 0, 0, 0.85);
		-webkit-text-stroke: 1px #fff;
		transform: skewX(-8deg) scaleY(0.86);
	}

	.caption {
		position: absolute;
		left: 616px;
		top: 775px;
		color: #fff;
		font-size: 46px;
		font-weight: 500;
		line-height: 56px;
		text-shadow: 2px 3px 3px rgba(30, 15, 35, 0.85);
	}

	.watermark {
		position: absolute;
		left: 1220px;
		top: 660px;
		width: 300px;
		height: 145px;
		fill: rgba(255, 255, 255, 0.76);
	}

	.mark {
		stroke: rgba(200, 202, 206, 0.6);
		stroke-width: 1.5;
	}

	.brand {
		stroke: rgba(205, 208, 211, 0.6);
		stroke-width: 1.5;
		font: 700 66px 'Liberation Sans', sans-serif;
	}

	.du {
		fill: #56605a;
		font: 700 38px 'Liberation Sans', sans-serif;
	}

	.cn {
		font: 700 48px 'Noto Sans CJK SC', sans-serif;
	}

	.url {
		font: 500 35px 'Noto Sans', sans-serif;
	}
</style>
